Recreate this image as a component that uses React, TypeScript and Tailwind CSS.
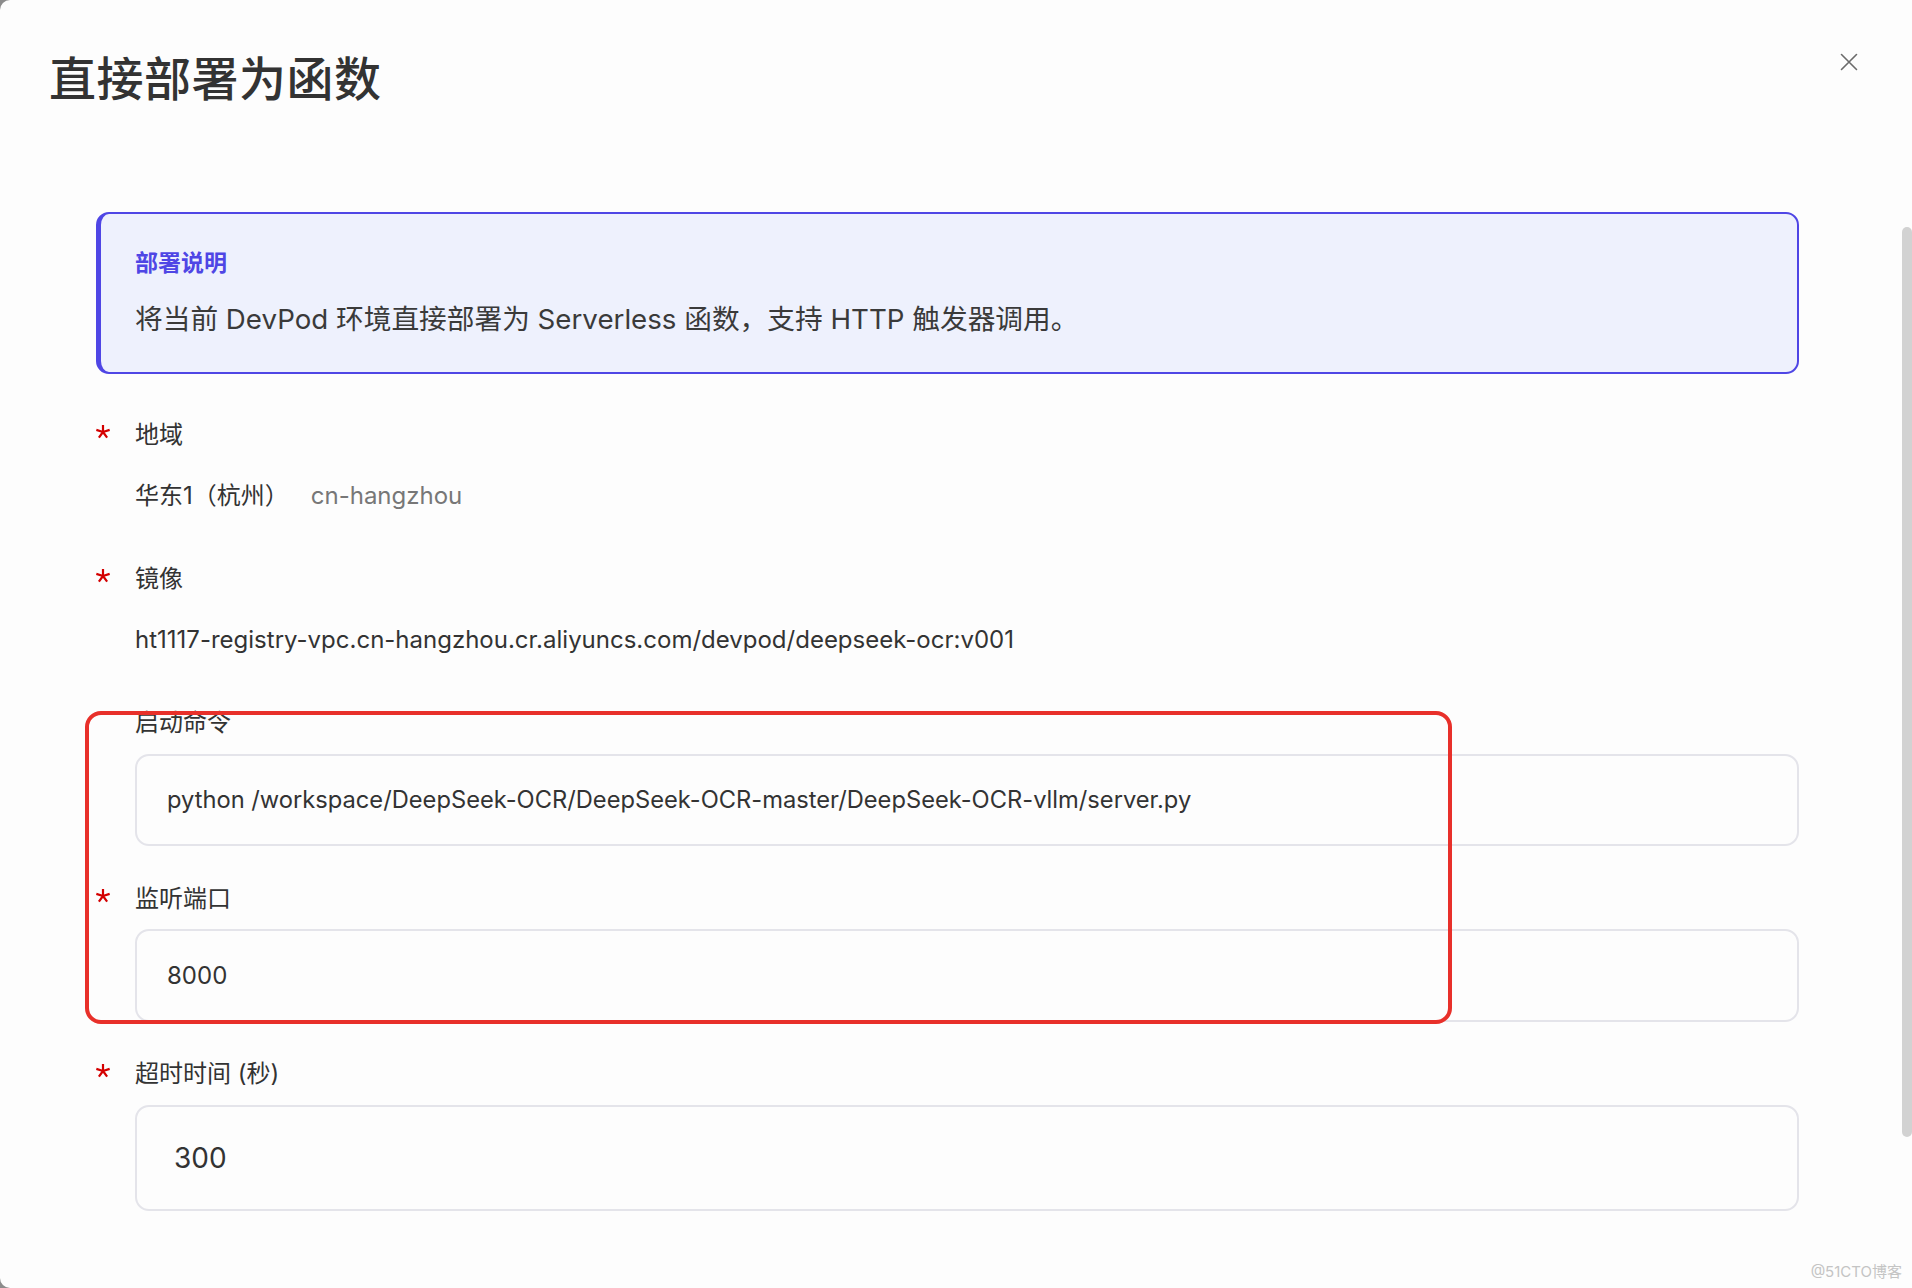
import React from 'react'

const FONT = "font-['Inter','Noto_Sans_CJK_SC',sans-serif]"

function Star() {
  return (
    <span className="w-[39px] shrink-0 flex items-center">
      <svg viewBox="0 0 16 16" width="16" height="16" className="-translate-y-[3px] -translate-x-[1px]" stroke="#d40000" strokeWidth="2.2" strokeLinecap="butt">
        <path d="M8 8 L8 1 M8 8 L14.66 5.84 M8 8 L12.11 13.66 M8 8 L3.89 13.66 M8 8 L1.34 5.84" />
      </svg>
    </span>
  )
}

function Label({ text, required = true, mt }: { text: string; required?: boolean; mt: string }) {
  return (
    <div className={`flex items-center ${mt}`}>
      {required ? <Star /> : <span className="w-[39px] shrink-0" />}
      <span className="text-[24px] leading-[32px] text-[#333]">{text}</span>
    </div>
  )
}

function Field({ value, mt, h, textClass }: { value: string; mt: string; h: string; textClass: string }) {
  return (
    <div
      className={`ml-[39px] w-[1664px] ${h} ${mt} flex items-center rounded-[14px] border-2 border-[#e4e4ea] bg-[#fdfdfd]`}
    >
      <span className={textClass}>{value}</span>
    </div>
  )
}

export default function App() {
  return (
    <div className={`w-[1912px] h-[1288px] overflow-hidden bg-[#8c8c8c] ${FONT}`}>
      <div className="relative h-full bg-[#fdfdfd] rounded-l-[10px]">
        {/* close */}
        <button className="absolute left-[1840px] top-[53px] w-[18px] h-[18px] text-[#6b6b6b]">
          <svg viewBox="0 0 18 18" width="18" height="18" fill="none" stroke="currentColor" strokeWidth="1.6" strokeLinecap="round">
            <path d="M1.5 1.5 L16.5 16.5 M16.5 1.5 L1.5 16.5" />
          </svg>
        </button>

        <h1 className="pl-[49px] pt-[51px] text-[47px] leading-[56px] font-medium text-[#333] tracking-[0.5px]">
          直接部署为函数
        </h1>

        {/* info box */}
        <div className="ml-[96px] mt-[105px] w-[1703px] h-[162px] rounded-[13px] border-2 border-l-[5px] border-[#4f46e5] bg-[#eef1fd] pl-[34px] pt-[33px]">
          <div className="text-[23px] leading-[32px] font-semibold text-[#4f46e5]">部署说明</div>
          <div className="mt-[22px] text-[27.7px] leading-[36px] text-[#3a3a3a]">
            将当前 DevPod 环境直接部署为 Serverless 函数，支持 HTTP 触发器调用。
          </div>
        </div>

        {/* form */}
        <div className="ml-[96px] flex flex-col">
          <Label text="地域" mt="mt-[45px]" />
          <div className="mt-[29px] ml-[39px] flex items-center text-[24px] leading-[32px]">
            <span className="text-[#333]">华东1（杭州）</span>
            <span className="ml-[22px] text-[#777]">cn-hangzhou</span>
          </div>

          <Label text="镜像" mt="mt-[51px]" />
          <div className="mt-[29px] ml-[39px] text-[24px] leading-[32px] text-[#333]">
            ht1117-registry-vpc.cn-hangzhou.cr.aliyuncs.com/devpod/deepseek-ocr:v001
          </div>

          <Label text="启动命令" required={false} mt="mt-[51px]" />
          <Field
            value="python /workspace/DeepSeek-OCR/DeepSeek-OCR-master/DeepSeek-OCR-vllm/server.py"
            mt="mt-[15px]"
            h="h-[92px]"
            textClass="pl-[30px] text-[23.7px] text-[#333]"
          />

          <Label text="监听端口" mt="mt-[37px]" />
          <Field value="8000" mt="mt-[14px]" h="h-[93px]" textClass="pl-[30px] text-[24px] text-[#333]" />

          <Label text="超时时间 (秒)" mt="mt-[36px]" />
          <Field value="300" mt="mt-[15px]" h="h-[106px]" textClass="pl-[37px] text-[28px] text-[#333]" />
        </div>

        {/* annotation */}
        <div className="absolute left-[85px] top-[711px] w-[1367px] h-[313px] rounded-[16px] border-4 border-[#e8302a] pointer-events-none" />

        {/* scrollbar */}
        <div className="absolute right-0 top-[227px] w-[10px] h-[910px] rounded-full bg-[#d2d2d2]" />

        <div className="absolute right-[10px] bottom-[5px] text-[15px] text-[#c4c4c4]">@51CTO博客</div>
      </div>
    </div>
  )
}
